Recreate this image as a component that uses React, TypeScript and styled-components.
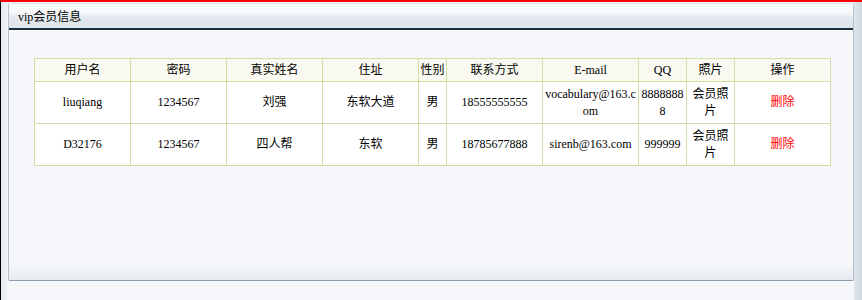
import styled, { createGlobalStyle } from "styled-components";

interface Member {
  username: string;
  password: string;
  realName: string;
  address: string;
  gender: string;
  phone: string;
  email: string;
  qq: string;
  photo: string;
}

const members: Member[] = [
  {
    username: "liuqiang",
    password: "1234567",
    realName: "刘强",
    address: "东软大道",
    gender: "男",
    phone: "18555555555",
    email: "vocabulary@163.com",
    qq: "88888888",
    photo: "会员照片",
  },
  {
    username: "D32176",
    password: "1234567",
    realName: "四人帮",
    address: "东软",
    gender: "男",
    phone: "18785677888",
    email: "sirenb@163.com",
    qq: "999999",
    photo: "会员照片",
  },
];

const columns = [
  { title: "用户名", width: 96 },
  { title: "密码", width: 96 },
  { title: "真实姓名", width: 96 },
  { title: "住址", width: 96 },
  { title: "性别", width: 28 },
  { title: "联系方式", width: 96 },
  { title: "E-mail", width: 96 },
  { title: "QQ", width: 48 },
  { title: "照片", width: 48 },
  { title: "操作", width: 96 },
];

const GlobalStyle = createGlobalStyle`
  html, body {
    margin: 0;
    padding: 0;
    background: #f5f7fa;
  }
  body {
    font-family: "Liberation Serif", "Noto Sans CJK SC", serif;
    font-size: 12px;
    color: #000;
  }
`;

const Frame = styled.div`
  height: 298px;
  border-top: 2px solid #ff0000;
  border-left: 1px solid #000;
  display: flex;
  background: #f5f7fa;
`;

const Gutter = styled.div`
  width: 7px;
  background: linear-gradient(to right, #e6eaef, #f1f4f7);
`;

const ScrollStrip = styled.div`
  width: 8px;
  background: linear-gradient(to right, #dfe5ec, #cfd8e2);
`;

const Panel = styled.div`
  width: 846px;
  box-sizing: border-box;
  margin-top: 1px;
  height: 278px;
  border: 1px solid #b4c0cc;
  border-top-color: #d8dfe6;
  border-bottom-color: #8c9cac;
  border-radius: 3px 3px 2px 2px;
  display: flex;
  flex-direction: column;
  background: #f5f7fa;
`;

const PanelHeader = styled.div`
  height: 26px;
  box-sizing: border-box;
  padding-left: 9px;
  display: flex;
  align-items: center;
  background: linear-gradient(to bottom, #fbfcfd 0%, #f4f6f8 40%, #e3e9ee 55%, #dde4ea 100%);
  border-bottom: 2px solid #1b2d3e;
  font-family: "Liberation Serif", "Noto Sans CJK SC", serif;
  font-size: 12px;
`;

const PanelBody = styled.div`
  flex: 1;
  padding: 28px 0 0 25px;
  background: linear-gradient(to bottom, #f5f7fa 0%, #f5f7fa 94%, #e6eaee 100%);
`;

const Table = styled.table`
  border-collapse: collapse;
  table-layout: fixed;
  width: 797px;
  background: #fff;
`;

const HeadCell = styled.th`
  height: 22px;
  padding: 0;
  font-weight: normal;
  background: #f9f9f1;
  border: 1px solid #d3dea6;
  text-align: center;
  line-height: 17px;
`;

const Cell = styled.td`
  height: 41px;
  padding: 0;
  border: 1px solid #d3dea6;
  text-align: center;
  vertical-align: middle;
  line-height: 17px;
  word-break: break-all;
`;

const DeleteLink = styled.a`
  color: #ff0000;
  text-decoration: none;
  cursor: pointer;
`;

const App = () => {
  return (
    <>
      <GlobalStyle />
      <Frame>
        <Gutter />
        <Panel>
          <PanelHeader>vip会员信息</PanelHeader>
          <PanelBody>
            <Table>
              <colgroup>
                {columns.map((c) => (
                  <col key={c.title} style={{ width: c.width }} />
                ))}
              </colgroup>
              <thead>
                <tr>
                  {columns.map((c) => (
                    <HeadCell key={c.title}>{c.title}</HeadCell>
                  ))}
                </tr>
              </thead>
              <tbody>
                {members.map((m) => (
                  <tr key={m.username}>
                    <Cell>{m.username}</Cell>
                    <Cell>{m.password}</Cell>
                    <Cell>{m.realName}</Cell>
                    <Cell>{m.address}</Cell>
                    <Cell>{m.gender}</Cell>
                    <Cell>{m.phone}</Cell>
                    <Cell>{m.email}</Cell>
                    <Cell>{m.qq}</Cell>
                    <Cell>{m.photo}</Cell>
                    <Cell>
                      <DeleteLink>删除</DeleteLink>
                    </Cell>
                  </tr>
                ))}
              </tbody>
            </Table>
          </PanelBody>
        </Panel>
        <ScrollStrip />
      </Frame>
    </>
  );
};

export default App;
